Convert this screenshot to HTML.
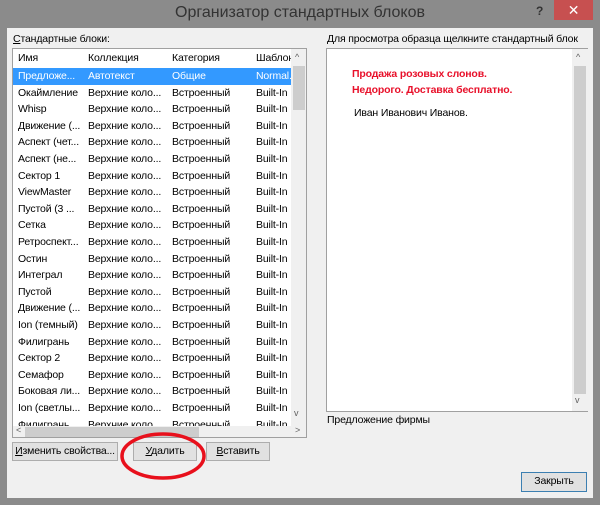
<!DOCTYPE html>
<html><head><meta charset="utf-8"><style>
*{margin:0;padding:0;box-sizing:border-box}
body{width:600px;height:505px;background:#8b8b8b;font-family:"Liberation Sans","DejaVu Sans",sans-serif;font-size:10.5px;letter-spacing:-0.15px;color:#000;position:relative;overflow:hidden}
.a{position:absolute;white-space:nowrap}
.title{left:0;top:4px;width:600px;text-align:center;font-size:16px;color:#333;letter-spacing:0}
.close{left:554px;top:0;width:39px;height:20px;background:#c75050;color:#fff;text-align:center;font-size:14px;line-height:20px;font-weight:bold}
.q{left:536px;top:4px;color:#333;font-weight:bold;font-size:12px}
.dlg{left:7px;top:28px;width:586px;height:470px;background:#f0f0f0}
.list{left:12px;top:48px;width:295px;height:390px;background:#fff;border:1px solid #a0a0a0;overflow:hidden}
.row{position:absolute;left:0;height:16.6px;width:278px;white-space:nowrap}
.row span{position:absolute;top:2px;overflow:hidden}
.sel{background:#3399ff;color:#fff}
.vs{background:#f0f0f0}
.btn{background:#e1e1e1;border:1px solid #adadad;text-align:center;line-height:17px}
</style></head><body>
<div class="a title">Организатор стандартных блоков</div>
<div class="a q">?</div>
<div class="a close">✕</div>
<div class="a dlg"></div>
<div class="a" style="left:13px;top:33px"><u>С</u>тандартные блоки:</div>
<div class="a list">
<div class="row" style="top:1px;height:18px"><span style="left:5px">Имя</span><span style="left:75px">Коллекция</span><span style="left:159px">Категория</span><span style="left:243px;width:35px">Шаблон</span></div>
<div id="rows"></div>
<div class="a vs" style="left:278px;top:0;width:16px;height:377px"><div class="a" style="left:2px;top:17px;width:12px;height:44px;background:#cdcdcd"></div><div class="a" style="left:4px;top:3px;font-size:9px;color:#606060">^</div><div class="a" style="left:3px;top:359px;font-size:9px;color:#606060">v</div></div>
<div class="a vs" style="left:0;top:377px;width:294px;height:12px"><div class="a" style="left:12px;top:1px;width:174px;height:10px;background:#cdcdcd"></div><div class="a" style="left:3px;top:-1px;font-size:9px;color:#606060">&lt;</div><div class="a" style="left:282px;top:-1px;font-size:9px;color:#606060">&gt;</div></div>
</div>
<div class="a" style="left:327px;top:33px">Для просмотра образца щелкните стандартный блок</div>
<div class="a" style="left:326px;top:48px;width:262px;height:364px;background:#fff;border:1px solid #a0a0a0">
<div class="a" style="left:25px;top:17px;color:#e8102a;font-weight:bold;line-height:16px">Продажа розовых слонов.<br>Недорого. Доставка бесплатно.</div>
<div class="a" style="left:27px;top:58px">Иван Иванович Иванов.</div>
<div class="a vs" style="left:245px;top:0;width:16px;height:362px"><div class="a" style="left:2px;top:17px;width:12px;height:328px;background:#cdcdcd"></div><div class="a" style="left:4px;top:3px;font-size:9px;color:#606060">^</div><div class="a" style="left:3px;top:346px;font-size:9px;color:#606060">v</div></div>
</div>
<div class="a" style="left:327px;top:414px">Предложение фирмы</div>
<div class="a btn" style="left:12px;top:442px;width:106px;height:19px"><u>И</u>зменить свойства...</div>
<div class="a btn" style="left:133px;top:442px;width:64px;height:19px"><u>У</u>далить</div>
<div class="a btn" style="left:206px;top:442px;width:64px;height:19px"><u>В</u>ставить</div>
<div class="a btn" style="left:521px;top:472px;width:66px;height:20px;border-color:#3c7fb1">Закрыть</div>
<svg class="a" style="left:0;top:0" width="600" height="505"><ellipse cx="163" cy="456" rx="41" ry="22" fill="none" stroke="#e8101c" stroke-width="3.5"/></svg>
<script>
var d=[["Предложе...","Автотекст","Общие","Normal.d..."],["Окаймление"],["Whisp"],["Движение (..."],["Аспект (чет..."],["Аспект (не..."],["Сектор 1"],["ViewMaster"],[" Пустой (3 ..."],["Сетка"],["Ретроспект..."],["Остин"],["Интеграл"],[" Пустой"],["Движение (..."],["Ion (темный)"],["Филигрань"],["Сектор 2"],["Семафор"],["Боковая ли..."],["Ion (светлы..."],["Филигрань"]];
var h="";d.forEach(function(r,i){var c=r.length>1?r:[r[0],"Верхние коло...","Встроенный","Built-In B..."];h+='<div class="row'+(i==0?' sel':'')+'" style="top:'+(19+i*16.6)+'px"><span style="left:5px;width:68px">'+c[0]+'</span><span style="left:75px;width:82px">'+c[1]+'</span><span style="left:159px">'+c[2]+'</span><span style="left:243px;width:35px">'+c[3]+'</span></div>'});
document.getElementById("rows").innerHTML=h;
</script>
</body></html>
